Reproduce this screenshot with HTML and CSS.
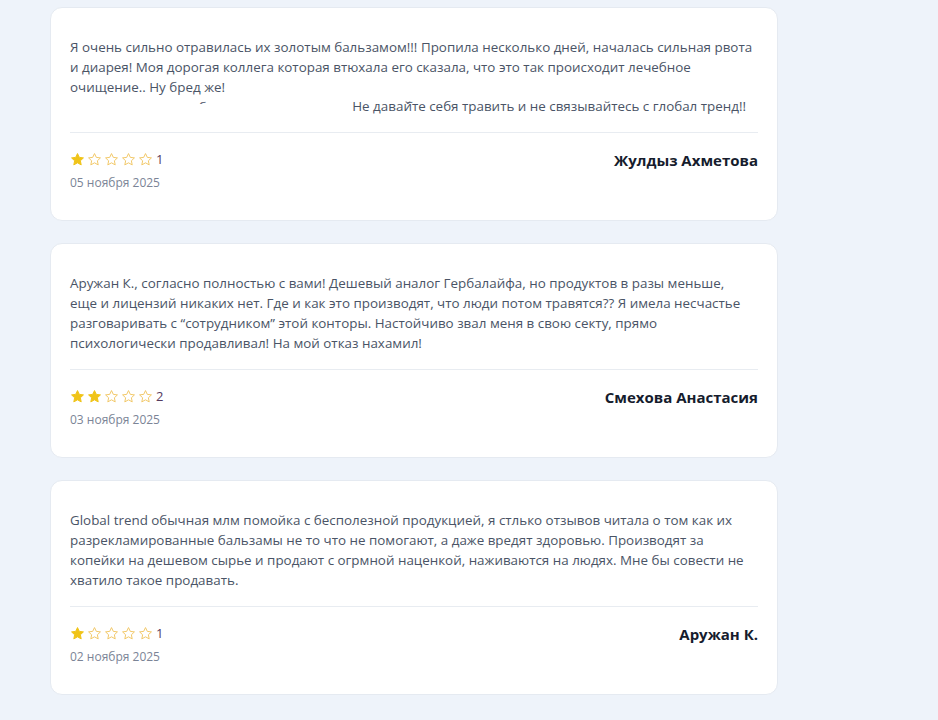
FILE: index.html
```html
<!DOCTYPE html>
<html lang="ru">
<head>
  <meta charset="UTF-8" />
  <meta name="viewport" content="width=device-width, initial-scale=1.0"/>
  <title>Отзывы</title>
  <link rel="stylesheet" href="styles.css">
</head>
<body>

  <div class="reviews">

    <div class="review-card">
      <div class="review-clip">
        <p class="review-text">Я очень сильно отравилась их золотым бальзамом!!! Пропила несколько дней, началась сильная рвота<br>и диарея! Моя дорогая коллега которая втюхала его сказала, что это так происходит лечебное<br>очищение.. Ну бред же!<br>а в итоге лечение обошлось мне дороже, чем этот бальзам</p>
      </div>
      <p class="review-text review-last">Не давайте себя травить и не связывайтесь с глобал тренд!!</p>
      <div class="review-footer">
        <div class="review-meta">
          <div class="stars">
            <svg class="star on" viewBox="0 0 24 24"><path d="M12 2.5l2.9 6.1 6.6.8-4.9 4.6 1.3 6.6L12 17.3l-5.9 3.3 1.3-6.6-4.9-4.6 6.6-.8z"/></svg>
            <svg class="star" viewBox="0 0 24 24"><path d="M12 2.5l2.9 6.1 6.6.8-4.9 4.6 1.3 6.6L12 17.3l-5.9 3.3 1.3-6.6-4.9-4.6 6.6-.8z"/></svg>
            <svg class="star" viewBox="0 0 24 24"><path d="M12 2.5l2.9 6.1 6.6.8-4.9 4.6 1.3 6.6L12 17.3l-5.9 3.3 1.3-6.6-4.9-4.6 6.6-.8z"/></svg>
            <svg class="star" viewBox="0 0 24 24"><path d="M12 2.5l2.9 6.1 6.6.8-4.9 4.6 1.3 6.6L12 17.3l-5.9 3.3 1.3-6.6-4.9-4.6 6.6-.8z"/></svg>
            <svg class="star" viewBox="0 0 24 24"><path d="M12 2.5l2.9 6.1 6.6.8-4.9 4.6 1.3 6.6L12 17.3l-5.9 3.3 1.3-6.6-4.9-4.6 6.6-.8z"/></svg>
            <span class="rating">1</span>
          </div>
          <div class="review-date">05 ноября 2025</div>
        </div>
        <div class="review-author">Жулдыз Ахметова</div>
      </div>
    </div>

    <div class="review-card">
      <p class="review-text">Аружан К., согласно полностью с вами! Дешевый аналог Гербалайфа, но продуктов в разы меньше,<br>еще и лицензий никаких нет. Где и как это производят, что люди потом травятся?? Я имела несчастье<br>разговаривать с “сотрудником” этой конторы. Настойчиво звал меня в свою секту, прямо<br>психологически продавливал! На мой отказ нахамил!</p>
      <div class="review-footer">
        <div class="review-meta">
          <div class="stars">
            <svg class="star on" viewBox="0 0 24 24"><path d="M12 2.5l2.9 6.1 6.6.8-4.9 4.6 1.3 6.6L12 17.3l-5.9 3.3 1.3-6.6-4.9-4.6 6.6-.8z"/></svg>
            <svg class="star on" viewBox="0 0 24 24"><path d="M12 2.5l2.9 6.1 6.6.8-4.9 4.6 1.3 6.6L12 17.3l-5.9 3.3 1.3-6.6-4.9-4.6 6.6-.8z"/></svg>
            <svg class="star" viewBox="0 0 24 24"><path d="M12 2.5l2.9 6.1 6.6.8-4.9 4.6 1.3 6.6L12 17.3l-5.9 3.3 1.3-6.6-4.9-4.6 6.6-.8z"/></svg>
            <svg class="star" viewBox="0 0 24 24"><path d="M12 2.5l2.9 6.1 6.6.8-4.9 4.6 1.3 6.6L12 17.3l-5.9 3.3 1.3-6.6-4.9-4.6 6.6-.8z"/></svg>
            <svg class="star" viewBox="0 0 24 24"><path d="M12 2.5l2.9 6.1 6.6.8-4.9 4.6 1.3 6.6L12 17.3l-5.9 3.3 1.3-6.6-4.9-4.6 6.6-.8z"/></svg>
            <span class="rating">2</span>
          </div>
          <div class="review-date">03 ноября 2025</div>
        </div>
        <div class="review-author">Смехова Анастасия</div>
      </div>
    </div>

    <div class="review-card">
      <p class="review-text">Global trend обычная млм помойка с бесполезной продукцией, я стлько отзывов читала о том как их<br>разрекламированные бальзамы не то что не помогают, а даже вредят здоровью. Производят за<br>копейки на дешевом сырье и продают с огрмной наценкой, наживаются на людях. Мне бы совести не<br>хватило такое продавать.</p>
      <div class="review-footer">
        <div class="review-meta">
          <div class="stars">
            <svg class="star on" viewBox="0 0 24 24"><path d="M12 2.5l2.9 6.1 6.6.8-4.9 4.6 1.3 6.6L12 17.3l-5.9 3.3 1.3-6.6-4.9-4.6 6.6-.8z"/></svg>
            <svg class="star" viewBox="0 0 24 24"><path d="M12 2.5l2.9 6.1 6.6.8-4.9 4.6 1.3 6.6L12 17.3l-5.9 3.3 1.3-6.6-4.9-4.6 6.6-.8z"/></svg>
            <svg class="star" viewBox="0 0 24 24"><path d="M12 2.5l2.9 6.1 6.6.8-4.9 4.6 1.3 6.6L12 17.3l-5.9 3.3 1.3-6.6-4.9-4.6 6.6-.8z"/></svg>
            <svg class="star" viewBox="0 0 24 24"><path d="M12 2.5l2.9 6.1 6.6.8-4.9 4.6 1.3 6.6L12 17.3l-5.9 3.3 1.3-6.6-4.9-4.6 6.6-.8z"/></svg>
            <svg class="star" viewBox="0 0 24 24"><path d="M12 2.5l2.9 6.1 6.6.8-4.9 4.6 1.3 6.6L12 17.3l-5.9 3.3 1.3-6.6-4.9-4.6 6.6-.8z"/></svg>
            <span class="rating">1</span>
          </div>
          <div class="review-date">02 ноября 2025</div>
        </div>
        <div class="review-author">Аружан К.</div>
      </div>
    </div>

  </div>

</body>
</html>
```

FILE: styles.css
```css
* { margin: 0; padding: 0; box-sizing: border-box; }
body {
  font-family: 'Open Sans', 'Noto Sans', sans-serif;
  background: #eef3fa;
  color: #4a5466;
  height: 100vh;
  overflow: hidden;
}
.reviews {
  width: 728px;
  margin-left: 50px;
  padding-top: 7px;
  display: flex;
  flex-direction: column;
  gap: 22px;
}
.review-card {
  background: #fff;
  border: 1px solid #e5eaf1;
  border-radius: 12px;
  padding: 29px 19px 29px;
}
.review-text {
  font-size: 13.4px;
  line-height: 20px;
  color: #4a5466;
  white-space: nowrap;
}
.review-clip {
  height: 67px;
  overflow: hidden;
}
.review-last {
  margin-top: -8px;
  text-align: right;
  padding-right: 12px;
}
.review-footer {
  margin-top: 16px;
  padding-top: 16px;
  border-top: 1px solid #e8ecf1;
  display: flex;
  justify-content: space-between;
  align-items: flex-start;
}
.stars {
  display: flex;
  align-items: center;
  gap: 2px;
  height: 20px;
}
.star {
  width: 15px;
  height: 15px;
  fill: none;
  stroke: #f2c96a;
  stroke-width: 1.6;
  stroke-linejoin: round;
}
.star.on {
  fill: #f0c419;
  stroke: #f0c419;
}
.rating {
  margin-left: 1px;
  font-size: 13px;
  color: #553a5e;
}
.review-date {
  margin-top: 6px;
  font-size: 12px;
  line-height: 16px;
  color: #7b8496;
}
.review-author {
  margin-top: 1px;
  font-size: 15px;
  line-height: 20px;
  font-weight: 700;
  color: #161c2d;
}
```
